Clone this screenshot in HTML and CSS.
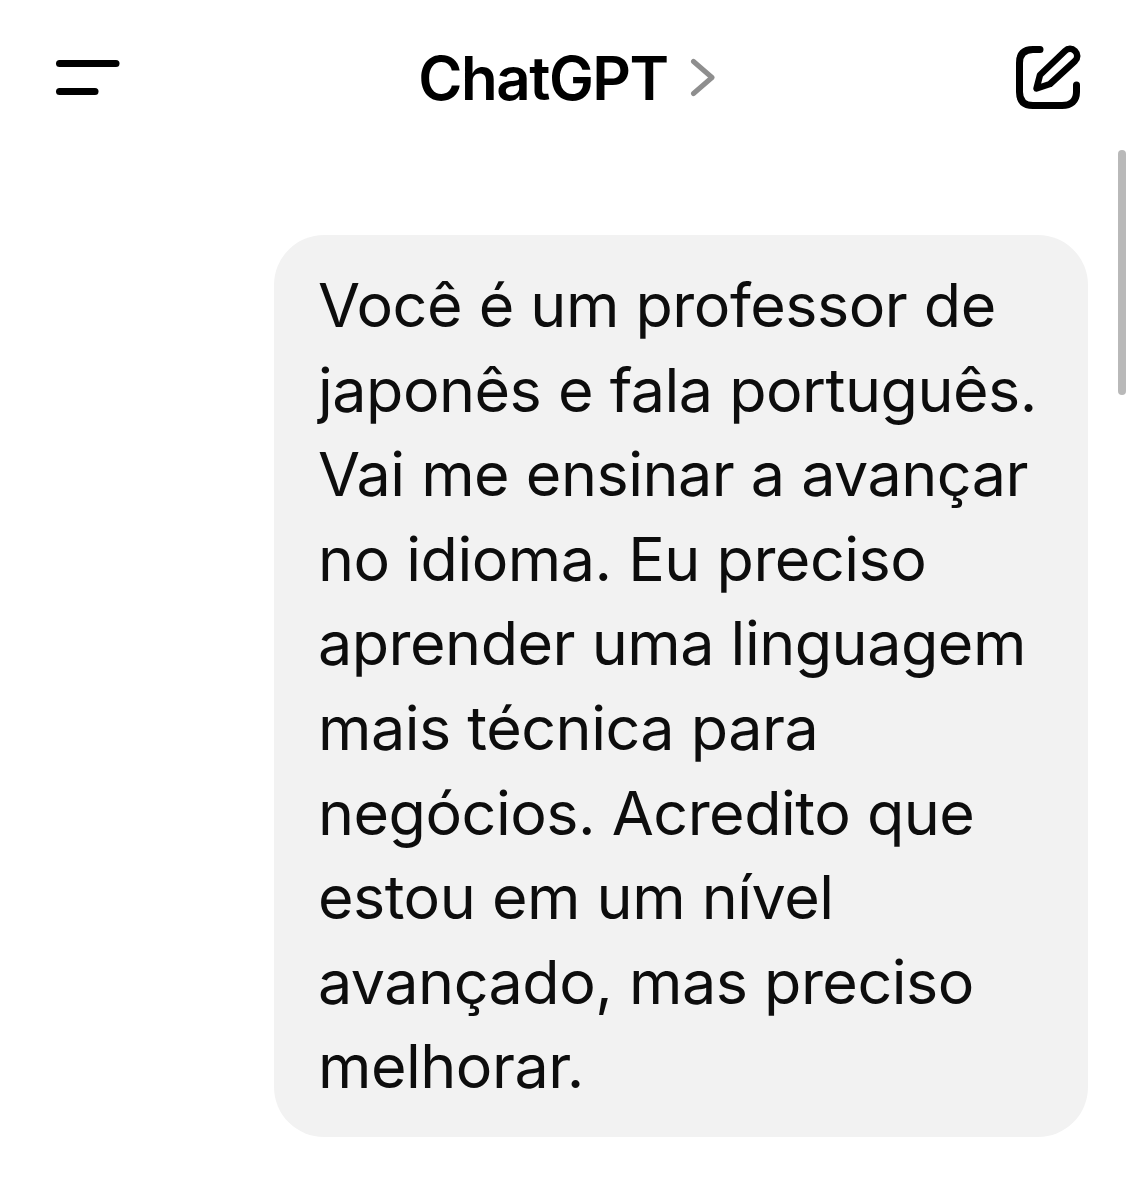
FILE: index.html
```html
<!DOCTYPE html>
<html lang="pt-BR">
<head>
    <meta charset="UTF-8">
    <meta name="viewport" content="width=device-width, initial-scale=1.0">
    <title>ChatGPT</title>
    <link rel="stylesheet" href="styles.css">
</head>
<body>

<!-- Header -->
<header class="header">
    <svg class="menu-icon" width="66" height="40" viewBox="0 0 66 40" fill="none" stroke="#000" stroke-width="7" stroke-linecap="round">
        <path d="M4.500 5.500H61"/>
        <path d="M4.500 33.500H40"/>
    </svg>
    <div class="title">
        <span>ChatGPT</span>
        <svg class="chevron" width="26" height="40" viewBox="0 0 26 40" fill="none" stroke="#8e8e8e" stroke-width="5" stroke-linecap="round" stroke-linejoin="round">
            <path d="M3.500 3.500L22 19.500L3.500 35.500"/>
        </svg>
    </div>
    <svg class="edit-icon" width="68" height="68" viewBox="0 0 68 68" fill="none" stroke="#000" stroke-width="7" stroke-linecap="round" stroke-linejoin="round">
        <path d="M27 5.500H20C11 5.500 6.500 10 6.500 19V48C6.500 57 11 61.500 20 61.500H49C58 61.500 63.500 57 63.500 48V41"/>
        <path stroke-width="6.500" d="M23.500 44.500L27 31L52 7C55 4 59 4 62 7C65 10 65 14 62 17L37 40Z"/>
    </svg>
</header>

<!-- Chat -->
<main class="chat">
    <div class="scrollbar"></div>
    <div class="bubble">
        Você é um professor de<br>
        japonês e fala português.<br>
        Vai me ensinar a avançar<br>
        no idioma. Eu preciso<br>
        aprender uma linguagem<br>
        mais técnica para<br>
        negócios. Acredito que<br>
        estou em um nível<br>
        avançado, mas preciso<br>
        melhorar.
    </div>
</main>

</body>
</html>
```

FILE: styles.css
```css
body {
    font-family: 'Inter', 'Liberation Sans', sans-serif;
    margin: 0;
    padding: 0;
    background-color: #fff;
    color: #0d0d0d;
    overflow: hidden;
}

.header {
    display: flex;
    justify-content: space-between;
    align-items: center;
    height: 156px;
    padding: 0 54px 0 55px;
}

.title {
    display: flex;
    align-items: center;
    gap: 22px;
    font-size: 60px;
    font-weight: 600;
    color: #000;
    letter-spacing: -1.5px;
}

.chat {
    position: relative;
    padding: 79px 47px 0 274px;
}

.scrollbar {
    position: absolute;
    top: -6px;
    right: 9px;
    width: 8px;
    height: 245px;
    border-radius: 4px;
    background-color: #b9b9b9;
}

.bubble {
    background-color: #f2f2f2;
    border-radius: 50px;
    padding: 28px 30px 28px 44px;
    font-size: 61px;
    letter-spacing: -0.5px;
    line-height: 84.6px;
    white-space: nowrap;
}
```
